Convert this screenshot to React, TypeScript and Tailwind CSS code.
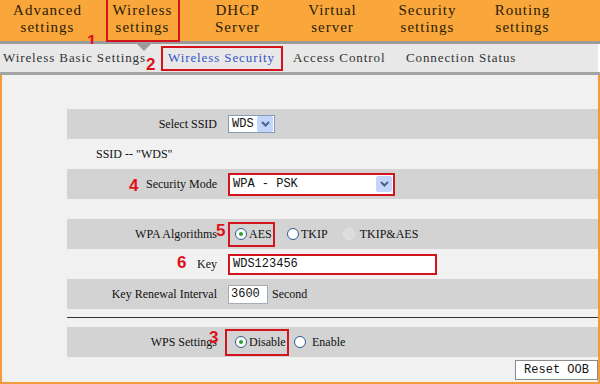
import React from 'react';

const serif = { fontFamily: '"Liberation Serif", "DejaVu Serif", serif' };
const mono = { fontFamily: '"Liberation Mono", "DejaVu Sans Mono", monospace' };

const menu = [
  ['Advanced', 'settings'],
  ['Wireless', 'settings'],
  ['DHCP', 'Server'],
  ['Virtual', 'server'],
  ['Security', 'settings'],
  ['Routing', 'settings'],
  ['S', ''],
];

const Num: React.FC<{ n: string; className: string }> = ({ n, className }) => (
  <span
    className={`absolute text-[17px] font-bold leading-none text-[#e0101a] ${className}`}
    style={{ fontFamily: '"Liberation Sans", Arial, sans-serif' }}
  >
    {n}
  </span>
);

const Radio: React.FC<{ checked?: boolean; disabled?: boolean }> = ({ checked, disabled }) => (
  <span
    className={`inline-flex h-[12px] w-[12px] shrink-0 items-center justify-center rounded-full border ${
      disabled ? 'border-[#e2e2e2] bg-[#dcdcdc]' : 'border-[#2c5a8c] bg-white'
    }`}
  >
    {checked && <span className="h-[4px] w-[4px] rounded-full bg-[#2aa12a]" />}
  </span>
);

const Arrow: React.FC = () => (
  <span className="flex h-[16px] w-[16px] items-center justify-center rounded-[2px] bg-[#c3d5fb]">
    <svg width="9" height="6" viewBox="0 0 9 6">
      <path d="M1 1 L4.5 4.5 L8 1" stroke="#4d6185" strokeWidth="2" fill="none" />
    </svg>
  </span>
);

const Row: React.FC<{ gray?: boolean; label?: React.ReactNode; children?: React.ReactNode }> = ({
  gray,
  label,
  children,
}) => (
  <div className={`flex h-[30px] items-center ${gray ? 'bg-[#d3d3d3]' : ''}`}>
    <div className="relative w-[150px] text-right">{label}</div>
    <div className="flex items-center pl-[11px]">{children}</div>
  </div>
);

export default function App() {
  return (
    <div className="flex h-[384px] w-[600px] flex-col overflow-hidden bg-[#f1f1f1] text-[12px] text-[#111]" style={serif}>
      {/* top menu */}
      <div className="flex h-[41px] shrink-0 bg-[#f9a63a] text-[15px] tracking-[1px] text-[#2a1c08]">
        {menu.map(([a, b], i) => (
          <div key={i} className="relative w-[95px] shrink-0 pt-[2px] text-center leading-[17px]">
            <div>{a}</div>
            <div>{b}</div>
            {i === 1 && (
              <span className="absolute left-[11px] top-[-2px] h-[44px] w-[74px] border-2 border-[#d4141c]" />
            )}
            {i === 1 && <Num n="1" className="left-[-8px] top-[33px]" />}
          </div>
        ))}
      </div>
      <div className="h-[3px] shrink-0 bg-[#9b9b9b]" />

      {/* sub menu */}
      <div className="relative flex h-[28px] shrink-0 items-center border-r-2 border-white bg-[#e8e8e8] text-[13px] tracking-[0.9px] text-[#333]">
        <span className="absolute left-[137px] top-0 h-0 w-0 border-x-[7px] border-t-[7px] border-x-transparent border-t-[#9b9b9b]" />
        <span className="ml-[3px] w-[158px] whitespace-nowrap">Wireless Basic Settings</span>
        <Num n="2" className="left-[146px] top-[12px]" />
        <span className="flex h-[25px] w-[122px] items-center whitespace-nowrap border-2 border-[#d4141c] pl-[5px] text-[#3656c8]">
          Wireless Security
        </span>
        <span className="ml-[10px] w-[113px] whitespace-nowrap">Access Control</span>
        <span className="whitespace-nowrap">Connection Status</span>
      </div>
      <div className="h-[3px] shrink-0 bg-[#a3a3a3]" />

      {/* content */}
      <div className="flex flex-1 flex-col border-x-2 border-b-2 border-[#f39a3a] pl-[65px] pt-[34px]">
        <Row gray label="Select SSID">
          <span className="flex h-[18px] w-[47px] items-center justify-between border border-[#7f9db9] bg-white pl-[3px] pr-[1px]" style={mono}>
            WDS
            <Arrow />
          </span>
        </Row>
        <div className="flex h-[30px] items-center pl-[29px]">SSID -- "WDS"</div>
        <Row
          gray
          label={
            <>
              <Num n="4" className="left-[62px] top-[2px]" />
              Security Mode
            </>
          }
        >
          <span className="flex h-[23px] w-[167px] items-center justify-between border-2 border-[#d4141c] bg-white pl-[3px] pr-[1px]" style={mono}>
            WPA - PSK
            <Arrow />
          </span>
        </Row>
        <div className="h-[20px]" />
        <Row
          gray
          label={
            <>
              WPA Algorithms
              <Num n="5" className="left-[149px] top-[-3px]" />
            </>
          }
        >
          <span className="flex h-[25px] w-[47px] items-center gap-[2px] border-2 border-[#d4141c] pl-[5px]">
            <Radio checked />
            AES
          </span>
          <span className="ml-[12px] flex items-center gap-[2px]">
            <Radio />
            TKIP
          </span>
          <span className="ml-[15px] flex items-center gap-[5px]">
            <Radio disabled />
            TKIP&amp;AES
          </span>
        </Row>
        <Row
          label={
            <>
              <Num n="6" className="left-[110px] top-[-1px]" />
              Key
            </>
          }
        >
          <span className="flex h-[21px] w-[209px] items-center border-2 border-[#d4141c] bg-white pl-[3px]" style={mono}>
            WDS123456
          </span>
        </Row>
        <Row gray label="Key Renewal Interval">
          <span className="flex h-[19px] w-[40px] items-center border border-[#a5acb5] bg-white pl-[2px]" style={mono}>
            3600
          </span>
          <span className="ml-[4px]">Second</span>
        </Row>
        <div className="mt-[8px] h-[1px] bg-[#333]" />
        <div className="h-[9px]" />
        <Row
          gray
          label={
            <>
              WPS Settings
              <Num n="3" className="left-[142px] top-[-4px]" />
            </>
          }
        >
          <span className="ml-[-3px] flex h-[27px] w-[64px] items-center gap-[2px] border-2 border-[#d4141c] pl-[8px]">
            <Radio checked />
            Disable
          </span>
          <span className="ml-[5px] flex items-center gap-[6px]">
            <Radio />
            Enable
          </span>
        </Row>
        <div className="flex justify-end pt-[3px]">
          <span className="flex h-[20px] w-[83px] items-center justify-center border border-[#8a8a8a] bg-white" style={mono}>
            Reset OOB
          </span>
        </div>
      </div>
    </div>
  );
}
